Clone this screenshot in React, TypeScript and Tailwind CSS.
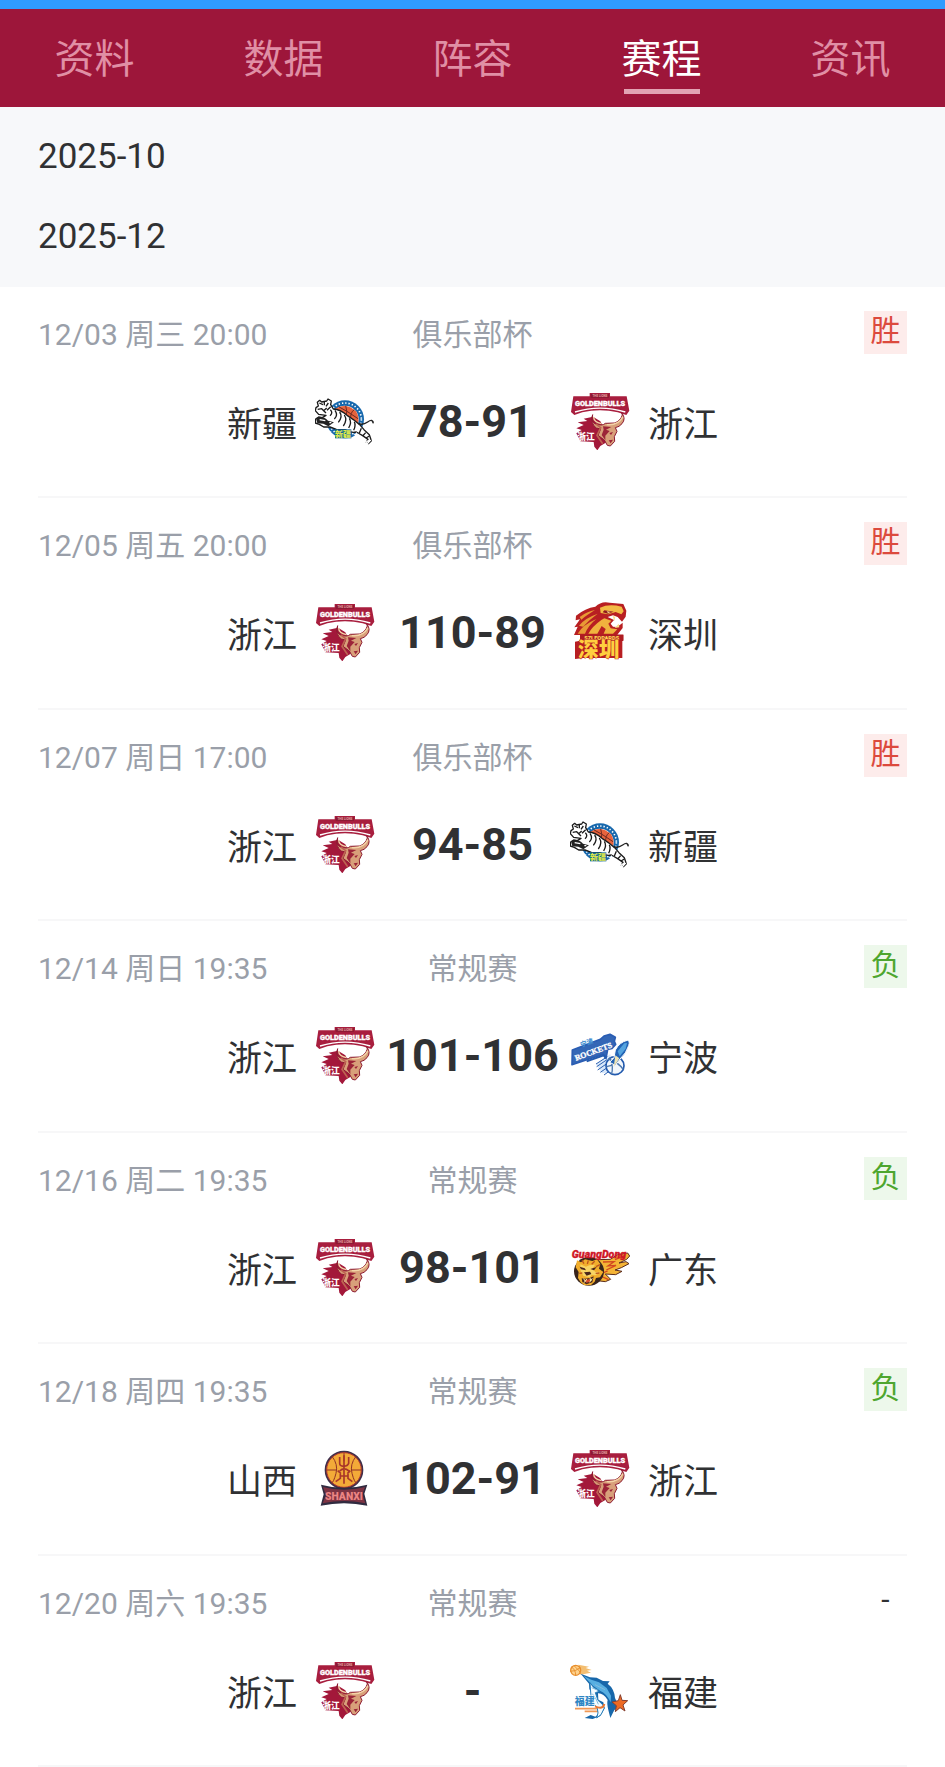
import React, { useState } from 'react';

type TeamId = 'zhejiang' | 'xinjiang' | 'shenzhen' | 'ningbo' | 'guangdong' | 'shanxi' | 'fujian';
type Result = '胜' | '负' | '-';

interface Match {
  time: string;
  stage: string;
  home: TeamId;
  away: TeamId;
  score: string;
  result: Result;
}

const tabs = ['资料', '数据', '阵容', '赛程', '资讯'];

const months = ['2025-10', '2025-12'];

const matches: Match[] = [
  { time: '12/03 周三 20:00', stage: '俱乐部杯', home: 'xinjiang', away: 'zhejiang', score: '78-91', result: '胜' },
  { time: '12/05 周五 20:00', stage: '俱乐部杯', home: 'zhejiang', away: 'shenzhen', score: '110-89', result: '胜' },
  { time: '12/07 周日 17:00', stage: '俱乐部杯', home: 'zhejiang', away: 'xinjiang', score: '94-85', result: '胜' },
  { time: '12/14 周日 19:35', stage: '常规赛', home: 'zhejiang', away: 'ningbo', score: '101-106', result: '负' },
  { time: '12/16 周二 19:35', stage: '常规赛', home: 'zhejiang', away: 'guangdong', score: '98-101', result: '负' },
  { time: '12/18 周四 19:35', stage: '常规赛', home: 'shanxi', away: 'zhejiang', score: '102-91', result: '负' },
  { time: '12/20 周六 19:35', stage: '常规赛', home: 'zhejiang', away: 'fujian', score: '-', result: '-' },
];

const ZhejiangLogo = () => (
  <svg className="size-15 shrink-0" viewBox="45 30 180 180" aria-hidden="true">
    <path d="M104 39H165V49H215L223 92L214 105L188 97Q135 84 82 97L58 105L48 96L55 49H104Z" fill="#a81e3e" />
    <path d="M107 42H162V54H107Z" fill="#8e1a34" />
    <text x="135" y="52" textAnchor="middle" fontSize="9" fontWeight="700" fill="#e7a9a4">THE LIONS</text>
    <text x="135" y="79" textAnchor="middle" fontSize="22" fontWeight="900" fill="#fff" stroke="#fff" strokeWidth="1">GOLDENBULLS</text>
    <path d="M60 96Q135 73 211 96" fill="none" stroke="#fff" strokeWidth="4" />
    <path d="M114 110L86 116L97 123L68 127L86 135L64 145L80 150L64 160L76 184L116 186L118 200L127 211L136 198L151 189L160 170L136 124Z" fill="#a3183a" />
    <path d="M113 104Q105 124 122 132Q142 139 151 130L178 129Q196 124 202 105L200 98Q214 116 201 131Q193 141 181 143L186 154L178 170L179 184L166 198L157 196L148 180L129 166L137 147L124 144Q106 132 113 104Z" fill="#d8a07a" stroke="#8d1a31" strokeWidth="3" strokeLinejoin="round" />
    <path d="M144 139L169 141L153 149L164 153L151 167L151 181L140 165L146 149ZM163 159L174 156L168 165ZM161 181L174 179L167 190Z" fill="#9c2438" />
    <path d="M123 132L137 143L126 166L143 191" fill="none" stroke="#bd6351" strokeWidth="5" />
    <path d="M116 111Q116 126 139 131M155 134Q190 137 204 110" fill="none" stroke="#f3d4a7" strokeWidth="4" />
    <text x="93" y="180" textAnchor="middle" fontSize="26" fontWeight="900" fill="#fff">浙江</text>
  </svg>
);

const XinjiangLogo = () => (
  <svg className="size-15 shrink-0" viewBox="48 30 180 180" aria-hidden="true">
    <circle cx="138" cy="118" r="57" fill="#1768ad" />
    <circle cx="138" cy="118" r="49" fill="none" stroke="#fff" strokeWidth="5" strokeDasharray="4 6" />
    <circle cx="138" cy="118" r="41" fill="#fff" />
    <path d="M104 90Q139 64 171 94Q183 111 176 136Q142 124 104 90Z" fill="#e7633d" />
    <path d="M119 80Q146 94 177 116M140 77Q146 93 141 113M166 89Q153 96 155 122" fill="none" stroke="#6e2820" strokeWidth="3" />
    <path d="M55 67L62 61L68 66L83 63L87 57L97 63L95 74L103 87Q124 88 144 106Q167 120 182 134L195 149L211 164L217 182L208 191L201 186L207 178L191 167L172 156Q156 160 138 149L112 148L93 141L74 141L61 133L49 129L50 117L59 111L70 113L81 106L59 103L49 92L51 83L58 78Z" fill="#fff" stroke="#1b1b1b" strokeWidth="4" strokeLinejoin="round" />
    <path d="M61 69L72 74M76 66V76M88 69L81 79M56 88L68 86L75 93M83 84L74 92L81 99M95 80L84 91" fill="none" stroke="#1b1b1b" strokeWidth="4" />
    <path d="M94 89Q103 98 93 107M108 91Q118 106 106 117M122 96Q132 110 118 127M136 105Q146 120 133 138M151 115Q159 127 149 144M166 125Q171 136 164 151M187 145L181 159M200 158L191 168M211 168L201 174" fill="none" stroke="#1b1b1b" strokeWidth="4" />
    <path d="M51 114Q75 107 87 122L105 127L88 139L73 131L55 130Z" fill="#222" />
    <path d="M62 119L79 122M91 128L97 128M200 184L213 182L204 192Z" fill="none" stroke="#fff" strokeWidth="4" />
    <path d="M178 130Q190 137 206 126T222 130L223 124" fill="none" stroke="#222" strokeWidth="4" />
    <rect x="108" y="148" width="49" height="27" fill="#17699a" />
    <text x="132" y="171" textAnchor="middle" fontSize="24" fontWeight="900" fill="#dce64a">新疆</text>
    <path d="M89 149L92 154L98 155L94 159L95 165L89 162L84 165L85 159L81 155L87 154ZM172 156L175 161L181 162L176 166L177 171L172 168L166 171L168 166L163 162L169 161Z" fill="#fff" />
  </svg>
);

const ShenzhenLogo = () => (
  <svg className="size-15 shrink-0" viewBox="45 36 180 180" aria-hidden="true">
    <path d="M63 80Q91 57 121 53Q139 35 164 41L205 45L214 65L212 83L201 98L188 84L174 79L158 84L177 93L167 104L174 113L187 114L203 101L203 117L187 137H205V154H202V207H86L60 210V158L75 155V138H57L68 113L58 115L75 91L62 94Z" fill="#b81f22" />
    <path d="M74 84Q96 67 120 63L98 77Q86 85 79 92ZM72 110Q88 88 128 74Q103 92 84 113ZM68 134Q82 108 124 90Q100 109 90 134Z" fill="#e89a35" />
    <path d="M100 134Q111 113 139 93L148 88L169 95L160 104L167 118L187 121L174 134H146L152 120L140 111L127 134Z" fill="#f0b23e" />
    <path d="M135 56Q162 43 200 53L206 67L199 76L182 69L160 76L137 72Z" fill="#f3bb45" />
    <path d="M148 64L176 68L159 74L143 70Z" fill="#8f171d" />
    <path d="M155 67L168 69L159 72Z" fill="#fff1a0" />
    <path d="M173 81L181 83L178 96ZM179 117L191 104L193 115Z" fill="#fae08a" />
    <rect x="76" y="137" width="129" height="19" fill="#ad1c22" />
    <text x="140" y="153" textAnchor="middle" fontSize="17" fontWeight="900" fill="#ffd555">SZLEOPARDS</text>
    <text x="131" y="203" textAnchor="middle" fontSize="62" fontWeight="900" fill="#ffcf3f" stroke="#b51f23" strokeWidth="3" paintOrder="stroke">深圳</text>
  </svg>
);

const NingboLogo = () => (
  <svg className="size-15 shrink-0" viewBox="45 30 180 180" aria-hidden="true">
    <path d="M123 151L166 120L176 173L141 178Z" fill="#d8e8fa" />
    <path d="M123 150L157 128M125 158L156 137M128 168L161 145M136 175L165 155M147 183L173 164" stroke="#2b60b1" strokeWidth="3" />
    <circle cx="180" cy="155" r="27" fill="#f2f7fc" stroke="#225aae" strokeWidth="5" />
    <path d="M159 135Q191 145 205 167M154 158Q181 154 197 131M169 182Q177 160 164 130" fill="none" stroke="#4c78ae" strokeWidth="4" />
    <path d="M177 131L181 108Q194 84 217 79Q226 80 221 95Q214 118 195 135L181 154L164 145Z" fill="#2364b5" stroke="#fff" strokeWidth="3" />
    <path d="M188 112L208 88L216 87L212 104L194 127Z" fill="#54a4df" />
    <path d="M181 124L193 133L176 160Z" fill="#eee4b5" />
    <path d="M52 108L136 76L147 66L165 61L181 70L178 82L182 91L171 103L158 106L153 133L145 121L51 152Z" fill="#3467b6" stroke="#2a5db3" strokeWidth="5" strokeLinejoin="round" />
    <g transform="rotate(-20 110 110)" fontWeight="900">
      <text x="114" y="122" textAnchor="middle" fontSize="24" fill="#fff" stroke="#fff" strokeWidth="1" className="font-['Liberation_Serif']">ROCKETS</text>
      <text x="104" y="90" textAnchor="middle" fontSize="20" fill="#438ed0">宁波</text>
    </g>
    <path d="M95 142L146 124L153 132" fill="none" stroke="#235bae" strokeWidth="6" />
  </svg>
);

const GuangdongLogo = () => (
  <svg className="size-15 shrink-0" viewBox="45 18 180 180" aria-hidden="true">
    <path d="M128 89L166 88L188 74L218 69L224 78L215 88L192 99L213 95L222 101L199 113L180 120L201 124L182 134L151 132L167 148L151 155L127 152Z" fill="#f4b436" stroke="#592b1d" strokeWidth="3" strokeLinejoin="round" />
    <path d="M144 96L177 95L159 108L183 106L154 120M140 130L158 123M139 139L161 149M180 89L209 77" fill="none" stroke="#d24720" strokeWidth="4" />
    <ellipse cx="102" cy="124" rx="45" ry="43" fill="#39251c" />
    <path d="M66 91L78 97L90 88L112 93L126 88L136 102L132 116L145 126L135 142L123 144L119 155L108 165L88 166L77 157L69 144L71 126L62 112Z" fill="#f2ae2c" />
    <path d="M76 103L93 110L103 106L120 104L112 116L121 126L135 125L122 136L110 134L104 142L85 137L77 123Z" fill="#f8d565" />
    <path d="M74 110L89 115L93 121L78 118ZM106 117L125 111L117 121ZM87 127L105 125L109 132L95 137ZM80 145Q99 149 116 139L112 157L94 163L82 156Z" fill="#49261b" />
    <path d="M89 150L106 147L104 156L94 158Z" fill="#d94c2c" />
    <path d="M86 146L91 154L95 147M105 143L107 153L112 145M86 158L92 153M104 157L108 150" fill="none" stroke="#fff0ac" strokeWidth="3" />
    <path d="M81 91L87 101M100 91L97 102M119 94L110 103M135 104L123 110M133 129L122 130M73 130L82 129" stroke="#bd541e" strokeWidth="4" />
    <text x="132" y="83" textAnchor="middle" fontSize="32" fontStyle="italic" fontWeight="900" fill="#d01828" stroke="#d01828" strokeWidth="1">GuangDong</text>
  </svg>
);

const ShanxiLogo = () => (
  <svg className="size-15 shrink-0" viewBox="48 24 180 180" aria-hidden="true">
    <circle cx="135" cy="93" r="55" fill="#f3aa38" stroke="#40304a" strokeWidth="6" />
    <circle cx="135" cy="93" r="52" fill="none" stroke="#b8392f" strokeWidth="3" />
    <path d="M82 93H112M158 93H188M99 52Q118 76 111 103T97 133M171 52Q152 76 159 103T173 133M135 42V67" fill="none" stroke="#923126" strokeWidth="3" />
    <path d="M122 54V73Q122 82 134 82T149 73V54M135 49V88M122 96Q135 83 150 96M135 93V134M124 105V118L110 128M147 105V118L160 128M116 95L126 104M154 95L145 104M123 111H149" fill="none" stroke="#a93629" strokeWidth="5" />
    <path d="M66 137Q135 156 205 137L196 164L205 200Q135 185 65 200L74 166Z" fill="#302b40" />
    <path d="M72 144Q135 161 198 144L190 166L199 193Q135 179 71 193L81 168Z" fill="#7d3343" />
    <text x="135" y="183" textAnchor="middle" fontSize="31" fontWeight="900" fill="#ec8583">SHANXI</text>
  </svg>
);

const FujianLogo = () => (
  <svg className="size-15 shrink-0" viewBox="45 27 180 180" aria-hidden="true">
    <path d="M70 44L102 50L92 54L110 60L96 62L108 68L76 74Z" fill="#f3be71" />
    <circle cx="62" cy="61" r="15" fill="#ffd28c" stroke="#e88d2b" strokeWidth="4" />
    <path d="M49 51Q62 58 62 77M45 64Q61 65 76 53M57 47Q75 63 77 71" fill="none" stroke="#e89332" strokeWidth="3" />
    <path d="M60 176H146M89 184H138" stroke="#f09855" strokeWidth="5" />
    <path d="M77 71L105 82L125 83L144 93L164 94L158 101Q178 116 180 144L192 171L178 180L166 204L160 180Q155 160 158 150Q145 129 129 130L130 149L145 157L149 175L136 198L113 207L89 204L107 195L121 200Q143 183 137 172L119 157Q111 131 103 117L102 101Z" fill="#1767aa" />
    <path d="M86 78L109 89L132 97L155 114L168 137L167 157Q155 130 135 122L114 107L106 99Z" fill="#58afe1" />
    <path d="M105 98Q114 115 133 124L121 128L129 151L142 163L148 174L138 194L125 204Q132 188 127 175L109 151L107 126Z" fill="#f4fbff" stroke="#267db9" strokeWidth="3" />
    <path d="M112 131L123 147L130 163M110 113L129 121M120 104L150 119" fill="none" stroke="#83bddd" strokeWidth="3" />
    <path d="M196 134L201 151L218 152L204 165L210 183L195 173L181 185L184 167L171 156L190 152Z" fill="#ed6a24" stroke="#833f31" strokeWidth="3" />
    <text x="89" y="166" textAnchor="middle" fontSize="30" fontWeight="900" fill="#2f86c4" stroke="#fff" strokeWidth="3" paintOrder="stroke">福建</text>
    <path d="M120 169Q144 180 148 162" fill="none" stroke="#ea7630" strokeWidth="6" />
  </svg>
);

const teams: Record<TeamId, { name: string; Logo: React.FC }> = {
  zhejiang: { name: '浙江', Logo: ZhejiangLogo },
  xinjiang: { name: '新疆', Logo: XinjiangLogo },
  shenzhen: { name: '深圳', Logo: ShenzhenLogo },
  ningbo: { name: '宁波', Logo: NingboLogo },
  guangdong: { name: '广东', Logo: GuangdongLogo },
  shanxi: { name: '山西', Logo: ShanxiLogo },
  fujian: { name: '福建', Logo: FujianLogo },
};

const resultStyles: Record<Result, string> = {
  胜: 'bg-[#fdeceb] text-[#dc4a3d]',
  负: 'bg-[#edf8eb] text-[#4ea62f]',
  '-': 'text-[#303133]',
};

const MatchRow: React.FC<{ match: Match }> = ({ match }) => {
  const home = teams[match.home];
  const away = teams[match.away];

  return (
    <li className="flex flex-col border-b-2 border-[#f7f7f8] pt-6 pb-10">
      <div className="grid grid-cols-3 items-start text-[30px] leading-[48px] text-[#9a9fa9]">
        <time className="whitespace-nowrap">{match.time}</time>
        <span className="text-center">{match.stage}</span>
        <span className={`flex size-[43px] justify-center justify-self-end leading-[40px] ${resultStyles[match.result]}`}>
          {match.result}
        </span>
      </div>

      <div className="mt-[31px] grid grid-cols-[1fr_195px_1fr] items-start text-[35px] leading-[48px] text-[#303133]">
        <div className="flex items-center justify-end gap-[18px]">
          <span className="pt-3">{home.name}</span>
          <home.Logo />
        </div>
        <strong className="text-center text-[45px] leading-[64px] font-bold whitespace-nowrap">{match.score}</strong>
        <div className="flex items-center gap-[18px]">
          <away.Logo />
          <span className="pt-3">{away.name}</span>
        </div>
      </div>
    </li>
  );
};

export default function App() {
  const [activeTab, setActiveTab] = useState('赛程');

  return (
    <div className="flex min-h-screen flex-col bg-white font-[Roboto,'Noto_Sans_CJK_SC',sans-serif]" lang="zh-CN">
      <div className="h-[9px] bg-[#2f9bff]" />

      {/* Tabs */}
      <nav className="grid grid-cols-5 bg-[#9d163a] pt-[22px] pb-[13px]">
        {tabs.map((tab) => (
          <button
            key={tab}
            type="button"
            aria-current={activeTab === tab ? 'page' : undefined}
            onClick={() => setActiveTab(tab)}
            className={`flex flex-col items-center text-[40px] leading-[58px] ${
              activeTab === tab ? 'text-white' : 'text-[#e08fa5]'
            }`}
          >
            {tab}
            <span className={`h-[5px] w-[76px] ${activeTab === tab ? 'bg-[#e2a3b3]' : 'bg-transparent'}`} />
          </button>
        ))}
      </nav>

      <main className="flex flex-1 flex-col">
        <div className="bg-[#f7f8fa] px-[38px] py-[10px]">
          {months.map((month) => (
            <h2 key={month} className="text-[35px] leading-[80px] text-[#303133]">
              {month}
            </h2>
          ))}
        </div>

        <ul className="grid flex-1 auto-rows-fr px-[38px]">
          {matches.map((match) => (
            <MatchRow key={match.time} match={match} />
          ))}
        </ul>
      </main>
    </div>
  );
}
